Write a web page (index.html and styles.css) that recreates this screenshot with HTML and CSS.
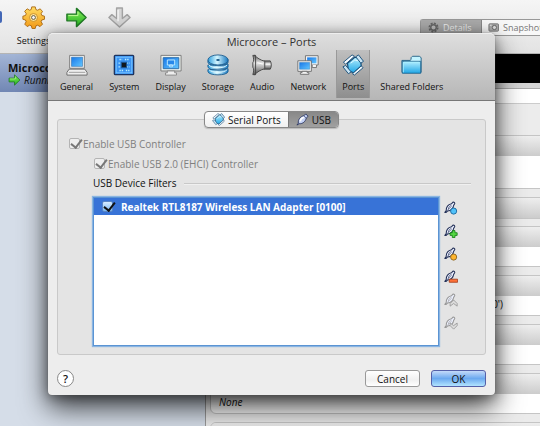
FILE: index.html
```html
<!DOCTYPE html>
<html lang="en">
<head>
<meta charset="utf-8">
<title>Microcore – Ports</title>
<link rel="stylesheet" href="styles.css">
</head>
<body>
<svg class="sprite" aria-hidden="true">
  <defs>
    <linearGradient id="blue" x1="0" y1="0" x2="1" y2="1"><stop offset="0" stop-color="#1877e8"/><stop offset="1" stop-color="#62c6ff"/></linearGradient>
    <linearGradient id="sky" x1="0" y1="0" x2="0" y2="1"><stop offset="0" stop-color="#b5efff"/><stop offset="1" stop-color="#1fa6e6"/></linearGradient>
    <linearGradient id="gold" x1="0" y1="0" x2="0" y2="1"><stop offset="0" stop-color="#ffdc62"/><stop offset="1" stop-color="#f39a18"/></linearGradient>
    <linearGradient id="green" x1="0" y1="0" x2="0" y2="1"><stop offset="0" stop-color="#8aef5c"/><stop offset="1" stop-color="#22b321"/></linearGradient>
    <linearGradient id="metal" x1="0" y1="0" x2="0" y2="1"><stop offset="0" stop-color="#666"/><stop offset=".4" stop-color="#e4e4e4"/><stop offset="1" stop-color="#555"/></linearGradient>
    <linearGradient id="disk" x1="0" y1="0" x2="1" y2="0"><stop offset="0" stop-color="#2d9fdf"/><stop offset=".45" stop-color="#d5f6ff"/><stop offset="1" stop-color="#1878c0"/></linearGradient>
    <symbol id="arrow" viewBox="0 0 24 22"><path d="M2 7.500h10V1.500l10 9.500-10 9.500v-6H2z" fill="url(#green)" stroke="#207a25" stroke-width="1.500" stroke-linejoin="round"/><path d="M3.500 9h10V5" fill="none" stroke="#c3ff9c"/></symbol>
    <symbol id="plug" viewBox="0 0 14 14"><path d="M1 13l1.500-2C2 7 5 3.500 8.500 3l2-2L13 3.500l-2 2C10.500 9 7 12 3.500 11.500z" fill="#c5d2f5" stroke="#2c3760" stroke-linejoin="round"/><path d="M4.500 9c.3-2 2-3.700 4-4.400" stroke="#fff" stroke-width="1.800" fill="none"/><path d="M8.500 3 11 5.500" stroke="#56648d"/></symbol>
    <symbol id="usb" viewBox="0 0 14 14"><path d="M1 13l1.500-2C2.500 6.500 5 4 8.500 3.200L10 1.500c1.500-.8 3 .8 2 2L11 5c-.5 4-3 6-7 6.500L2.500 13z" fill="#edf1ff" stroke="currentColor" stroke-width="1.200" stroke-linejoin="round"/><path d="M5 9.500C5 7 6.500 5.500 8.500 5M3.500 11l5-5" stroke="currentColor" stroke-width=".7" fill="none"/></symbol>
    <symbol id="port" viewBox="0 0 24 24"><g stroke="#174e79" stroke-linejoin="round"><path d="M6 10 14 3.500l6 1.500 1 8-8 7.500-6-2z" fill="url(#sky)" stroke-width="1.300"/><path d="M1.500 9 11 1l2.500 1.500L4 11z" fill="#f7fbff"/><path d="M11.500 21.500 21 13l2 2-9.500 8z" fill="#eff6fa"/><path d="m1 14 3-1.500 6 7-3 2zM15 3l3-2 5.500 7-3 2z" fill="#c9e4f3"/></g><path d="M9.500 10l4.500-3.500 3.500 1" stroke="#e9fbff" fill="none"/></symbol>
  </defs>
</svg>

<div class="app">
  <header class="app-bar">
    <span class="edge" aria-hidden="true"></span>
    <button class="app-tool" type="button">
      <svg class="big-icon" viewBox="-1 0 26 26"><g stroke="#a8650e" stroke-linejoin="round"><path fill="url(#gold)" d="m10 1 4 0 .7 3 2 .8 2.700-1.600 2.800 2.800-1.600 2.700.8 2 3 .8v3.500l-3 .8-.8 2 1.600 2.700-2.800 2.800-2.700-1.600-2 .8-.8 3h-3.500l-.8-3-2-.8-2.700 1.600L2.100 20.500l1.600-2.700-.8-2L0 15v-3.500l3-.8.8-2L2 6 4.900 3.200l2.700 1.600 1.800-.8z"/><circle cx="12" cy="13" r="4.500" fill="#ffe69a" stroke="#c98a22"/><circle cx="12" cy="13" r="2.200" fill="#f7f7f7" stroke="#554c3a"/></g></svg>
      <span>Settings</span>
    </button>
    <button class="app-tool" type="button" aria-label="Start"><svg class="big-icon"><use href="#arrow"/></svg></button>
    <button class="app-tool" type="button" aria-label="Discard"><svg class="big-icon" viewBox="0 0 24 24"><path d="M9 2h6v11l5-4 3 3-11 10L1 12l3-3 5 4z" fill="#d6d6d6" stroke="#a3a3a3" stroke-width="1.500" stroke-linejoin="round"/><path d="M10.500 4v12" stroke="#f5f5f5" stroke-width="1.500"/></svg></button>
    <div class="app-tabs">
      <button class="app-tab on" type="button"><svg viewBox="0 0 12 12"><circle cx="6" cy="6" r="4.500" fill="none" stroke="#666" stroke-width="2" stroke-dasharray="2.200 1.300"/><circle cx="6" cy="6" r="3" fill="#bbb" stroke="#666" stroke-width="1.500"/></svg>Details</button>
      <button class="app-tab" type="button"><svg viewBox="0 0 12 12"><rect x="1" y="2" width="10.500" height="8" rx="1" fill="#aaa" stroke="#777"/><circle cx="7" cy="6" r="2.300" fill="#ddd" stroke="#666"/><path d="M2 3.500h2" stroke="#eee"/></svg>Snapshots</button>
    </div>
  </header>
  <div class="app-body">
    <aside class="machines">
      <div class="machine"><strong>Microcore</strong><span class="state"><svg><use href="#arrow"/></svg>Running</span></div>
    </aside>
    <main class="details">
      <div class="preview"></div>
      <div class="strip"></div>
      <div class="spacer"></div>
      <section class="card tall"><h2></h2><p></p></section>
      <section class="card bare"><h2></h2></section>
      <section class="card"><h2></h2><p></p></section>
      <section class="card"><h2></h2><p class="end">(Bridged adapter, 'en0')</p></section>
      <section class="card"><h2></h2><p></p></section>
      <section class="card"><h2></h2><p class="none">None</p></section>
      <section class="card"><h2><i class="dot"></i></h2></section>
    </main>
  </div>
</div>

<div class="overlay">
  <form class="dialog" role="dialog" aria-labelledby="title">
    <header class="dialog-head">
      <h1 id="title">Microcore – Ports</h1>
      <nav class="tools">
        <button type="button"><svg viewBox="0 0 24 24"><path d="M4 1.500h16v14H4z" fill="#f6f6f6" stroke="#777"/><path d="M6 3.500h12v10H6z" fill="url(#blue)" stroke="#276baa" stroke-width=".6"/><path d="M3.500 16.500h17L23 20v3H1v-3z" fill="#eee" stroke="#666"/><path d="M3 20h18" stroke="#999"/></svg>General</button>
        <button type="button"><svg viewBox="0 0 24 24"><rect x="1.500" y="1.500" width="21" height="21" rx="1" fill="#3b93f2" stroke="#1d3460" stroke-width="1.500"/><rect x="3.500" y="3.500" width="17" height="17" fill="none" stroke="#7cc6ff"/><path d="M7 6h3M13 6h5M6 10h3m6 0h3M6 14h3m6 0h3M7 18h4m3 0h4" stroke="#baf0ff" stroke-width="1.500" stroke-dasharray="1.500 1"/><rect x="9" y="9" width="6" height="6" fill="#101820" stroke="#1d5b9e"/></svg>System</button>
        <button type="button"><svg viewBox="0 0 24 24"><path d="M1 1.500h22v17H1z" fill="#eef2ee" stroke="#777"/><path d="M3.500 4h17v12h-17z" fill="url(#blue)" stroke="#276baa"/><path d="M8 6.500h8v5.500H8zM10.500 12h3v2h-3z" fill="#2688eb" stroke="#c4edff"/><path d="M8 18.500h8v2h2V23H6v-2.500h2z" fill="#eee" stroke="#888"/></svg>Display</button>
        <button type="button"><svg viewBox="0 0 24 24"><g fill="url(#disk)" stroke="#226092"><path d="M1 17v2c0 5 22 5 22 0v-3zM1 12v2c0 5 22 5 22 0v-3zM1 7v2c0 5 22 5 22 0V6z"/><ellipse cx="12" cy="6.500" rx="11" ry="5.500"/></g><path d="M2 12c3 4 17 4 20 0M2 17c3 4 17 4 20 0" stroke="#e7fbff" fill="none"/><ellipse cx="12" cy="6.500" rx="2" ry="1" fill="#175685"/></svg>Storage</button>
        <button type="button"><svg viewBox="0 0 24 24"><g fill="url(#metal)" stroke="#444" stroke-linejoin="round"><path d="M14 7.500h7c1.500 2 1.500 7 0 9h-7z"/><path d="M4 1.500c3 3 6 5 11 6.500v8C10 17.500 7 19.500 4 22.500z"/><path d="M2 1.500h3v21H2c1.200-4 1.200-6.500 0-8v-5c1.200-1.500 1.200-4 0-8z"/></g><path d="M16 11h5M7 9.500l6 1.500" stroke="#fff"/></svg>Audio</button>
        <button type="button"><svg viewBox="0 0 26 24"><g fill="#f4f4f4" stroke="#666"><path d="M10 1h15v11H10z"/><path d="M18 12v3h5v-3"/></g><path d="M12 3h11v7H12z" fill="url(#blue)"/><g fill="#f4f4f4" stroke="#666"><path d="M1 7h16v12.500H1z"/><path d="M6 19.500h6v1.500h2v2H4v-2h2z"/></g><path d="M3 9h12v8H3z" fill="url(#blue)" stroke="#297aba" stroke-width=".5"/></svg>Network</button>
        <button type="button" class="on"><svg><use href="#port"/></svg>Ports</button>
        <button type="button"><svg viewBox="0 0 24 24"><path d="M11 6V4l1.500-1.500H20L22 4v16H1V7h9z" fill="#c4f4ff" stroke="#225f83"/><path d="M1.500 8h20v13h-20z" fill="url(#sky)" stroke="#21658f"/><path d="M3 9h17M2.500 9v11" stroke="#a9efff"/></svg>Shared Folders</button>
      </nav>
    </header>
    <div class="dialog-body">
      <div class="tabs">
        <button type="button"><svg><use href="#port"/></svg>Serial Ports</button>
        <button type="button" class="on"><svg><use href="#plug"/></svg>USB</button>
      </div>
      <div class="panel">
        <label class="check"><input type="checkbox" checked disabled>Enable USB Controller</label>
        <label class="check inner"><input type="checkbox" checked disabled>Enable USB 2.0 (EHCI) Controller</label>
        <h2 class="group">USB Device Filters</h2>
        <div class="filters">
          <ul class="list">
            <li><label class="check"><input type="checkbox" checked>Realtek RTL8187 Wireless LAN Adapter [0100]</label></li>
          </ul>
          <div class="actions">
            <button type="button" aria-label="Add empty filter"><svg viewBox="0 0 16 16"><use href="#usb" width="14" height="14"/><circle cx="11" cy="11.500" r="3.500" fill="#51c2fa" stroke="#16649b"/></svg></button>
            <button type="button" aria-label="Add filter from device"><svg viewBox="0 0 16 16"><use href="#usb" width="14" height="14"/><path d="M9.500 7.500h3V10H15v3h-2.500v2.500h-3V13H7v-3h2.500z" fill="#55d743" stroke="#168018"/></svg></button>
            <button type="button" aria-label="Edit filter"><svg viewBox="0 0 16 16"><use href="#usb" width="14" height="14"/><circle cx="11" cy="11.500" r="3.500" fill="#ffb52d" stroke="#87601b"/></svg></button>
            <button type="button" aria-label="Remove filter"><svg viewBox="0 0 16 16"><use href="#usb" width="14" height="14"/><path d="M6 10.500h9.500v3.500H6z" fill="#ff7138" stroke="#a84422"/></svg></button>
            <button type="button" aria-label="Move filter up" disabled><svg viewBox="0 0 16 16"><use href="#usb" width="14" height="14"/><path d="m7 12 4-4 4 4v3l-4-3-4 3z" fill="#ddd" stroke="#999"/></svg></button>
            <button type="button" aria-label="Move filter down" disabled><svg viewBox="0 0 16 16"><use href="#usb" width="14" height="14"/><path d="m7 8 4 3 4-3v3l-4 4-4-4z" fill="#ddd" stroke="#999"/></svg></button>
          </div>
        </div>
      </div>
      <footer class="buttons">
        <button type="button" class="help" aria-label="Help">?</button>
        <button type="button" class="push">Cancel</button>
        <button type="submit" class="push default">OK</button>
      </footer>
    </div>
  </form>
</div>
</body>
</html>
```
FILE: styles.css
```css
* { box-sizing: border-box; }
body {
  margin: 0;
  height: 100vh;
  overflow: hidden;
  font: 500 10px/14px "Open Sans", "Noto Sans", sans-serif;
  color: #111;
}
button { border: 0; padding: 0; background: none; font: inherit; color: inherit; }
h1, h2, p, ul { margin: 0; padding: 0; font: inherit; list-style: none; }
svg { display: block; flex: none; }
.sprite { position: absolute; width: 0; height: 0; }

/* Manager window */
.app { height: 100vh; display: flex; flex-direction: column; background: #ebebeb; }
.app-bar {
  height: 54px;
  flex: none;
  display: flex;
  align-items: flex-start;
  gap: 20px;
  padding: 6px 0 0;
  background: linear-gradient(#f5f5f5, #e3e3e3);
  border-bottom: 1px solid #b4b4b4;
}
.edge { width: 2px; height: 12px; margin-top: 5px; background: #4367b6; border-radius: 0 4px 4px 0; }
.app-tool { display: flex; flex-direction: column; align-items: center; gap: 5px; width: 23px; font-size: 9px; }
.big-icon { width: 23px; height: 23px; }
.app-tabs { display: flex; flex: none; width: 120px; margin: 13px 0 0 auto; height: 17px; border: 1px solid #989898; border-right: 0; border-radius: 3px 0 0 3px; font-size: 9px; }
.app-tab { display: flex; align-items: center; gap: 4px; padding: 0 6px; color: #777; background: #f8f8f8; }
.app-tab.on { width: 61px; flex: none; padding: 0 7px; background: #aaa; color: #eee; border-right: 1px solid #888; }
.app-tab svg { width: 11px; height: 11px; }
.app-body { flex: 1; display: flex; min-height: 0; }
.machines { width: 206px; flex: none; background: #d5dde8; border-right: 1px solid #999; }
.machine { height: 38px; padding: 8px; background: linear-gradient(#a3b5d6, #7187b4); line-height: 12px; }
.machine strong { display: block; font-size: 11px; }
.state { display: flex; gap: 3px; font-style: italic; }
.state svg { width: 13px; height: 12px; }
.details { flex: 1; min-width: 0; overflow: hidden; }
.preview { height: 29px; background: #000; }
.strip { height: 6px; background: #d5d5d5; border-bottom: 1px solid #aaa; }
.spacer { height: 46px; background: linear-gradient(#fff 14px, #ccc 14px, #ccc 15px, #ececec 15px); }
.card { margin: 0 -8px 8px 4px; border: 1px solid #c5c5c5; border-radius: 6px; background: #fff; overflow: hidden; }
.card h2 { height: 20px; background: linear-gradient(#eee, #ccc); padding: 4px 8px; }
.card p { height: 19px; padding: 1px 8px; }
.card.tall p { height: 32px; }
.card.bare { margin-bottom: 7px; }
.card .end { text-align: right; padding-right: 44px; }
.card .none { font-style: italic; }
.dot { display: block; width: 10px; height: 10px; border-radius: 50%; border: 1px solid #444; background: #3da33c; }

/* Settings dialog */
.overlay { position: absolute; inset: 0; padding: 33px 45px 31px 48px; display: flex; }
.dialog {
  flex: 1;
  display: flex;
  flex-direction: column;
  border-radius: 5px 5px 4px 4px;
  background: #ededed;
  box-shadow: 0 0 1px #555, 0 12px 28px rgba(0, 0, 0, .75), 0 2px 12px rgba(0, 0, 0, .35);
}
.dialog-head {
  padding: 0 6px 2px;
  background: linear-gradient(#dedede, #b6b6b6);
  border-top: 1px solid #eee;
  border-bottom: 1px solid #777;
  border-radius: 5px 5px 0 0;
}
.dialog-head h1 { text-align: center; line-height: 16px; color: #333; font-size: 11px; font-weight: 400; }
.tools { display: flex; gap: 4px; }
.tools button { display: flex; flex-direction: column; align-items: center; gap: 5px; padding: 4px 6px; font-size: 9px; line-height: 12px; height: 48px; white-space: nowrap; }
.tools svg { width: 22px; height: 22px; }
.tools .on { background: linear-gradient(#bfbfbf, #8e8e8e); box-shadow: inset 1px 0 #999, inset -1px 0 #999; }
.dialog-body { flex: 1; display: flex; flex-direction: column; padding: 10px 9px 8px; }
.tabs { position: relative; display: flex; align-self: center; height: 17px; margin-bottom: -9px; border: 1px solid #888; border-radius: 4px; background: linear-gradient(#fff, #f0f0f0); box-shadow: 0 1px 1px #bbb; }
.tabs button { display: flex; align-items: center; gap: 3px; padding: 0 7px; }
.tabs svg { width: 13px; height: 13px; }
.tabs .on { background: linear-gradient(#888, #a0a0a0); border-radius: 0 3px 3px 0; border-left: 1px solid #777; }
.panel { flex: 1; display: flex; flex-direction: column; padding: 16px 27px 8px 11px; background: #e4e4e4; border: 1px solid #c9c9c9; border-radius: 3px; }
.check { display: flex; align-items: center; gap: 3px; height: 15px; }
.check:has(:disabled) { color: #808080; margin-bottom: 5px; }
.check.inner { margin-left: 25px; }
.check input { appearance: none; position: relative; width: 11px; height: 11px; margin: 0; border: 1px solid #b4b4b4; border-radius: 2px; background: #eee; }
.check input::after { content: ""; position: absolute; left: 3px; top: -2px; width: 5px; height: 9px; border: solid #777; border-width: 0 2px 2px 0; transform: rotate(38deg); }
.list .check input { background: linear-gradient(#d7ecff, #7bb8f5); border-color: #5b86c4; }
.list .check input::after { border-color: #111; }
.group { display: flex; align-items: center; gap: 8px; margin: 0 0 7px 24px; }
.group::after { content: ""; flex: 1; margin-right: -13px; height: 1px; background: #c8c8c8; box-shadow: 0 1px #f0f0f0; }
.filters { flex: 1; display: flex; gap: 5px; margin-left: 24px; }
.list { flex: 1; border: 1px solid #5b94d3; box-shadow: 0 0 1px 1px #8bb5e2; background: #fff; }
.list li { background: #3873d7; color: #fff; font-weight: 700; padding: 1px 8px; height: 17px; }
.list .check { gap: 8px; }
.actions { display: flex; flex-direction: column; gap: 9px; padding-top: 4px; color: #253259; }
.actions svg { width: 14px; height: 14px; }
.actions :disabled { color: #999; }
.buttons { display: flex; align-items: center; gap: 11px; margin-top: 15px; }
.help { width: 17px; height: 17px; margin-right: auto; border: 1px solid #888; border-radius: 50%; background: #fff; font-weight: 600; font-size: 11px; }
.push { width: 55px; height: 17px; border: 1px solid #999; border-radius: 3px; background: linear-gradient(#fff, #f0f0f0 60%, #fff); }
.push.default { border-color: #5460a8; background: linear-gradient(#c4dafa, #6ba9ef 50%, #b2e4ff); }
```
